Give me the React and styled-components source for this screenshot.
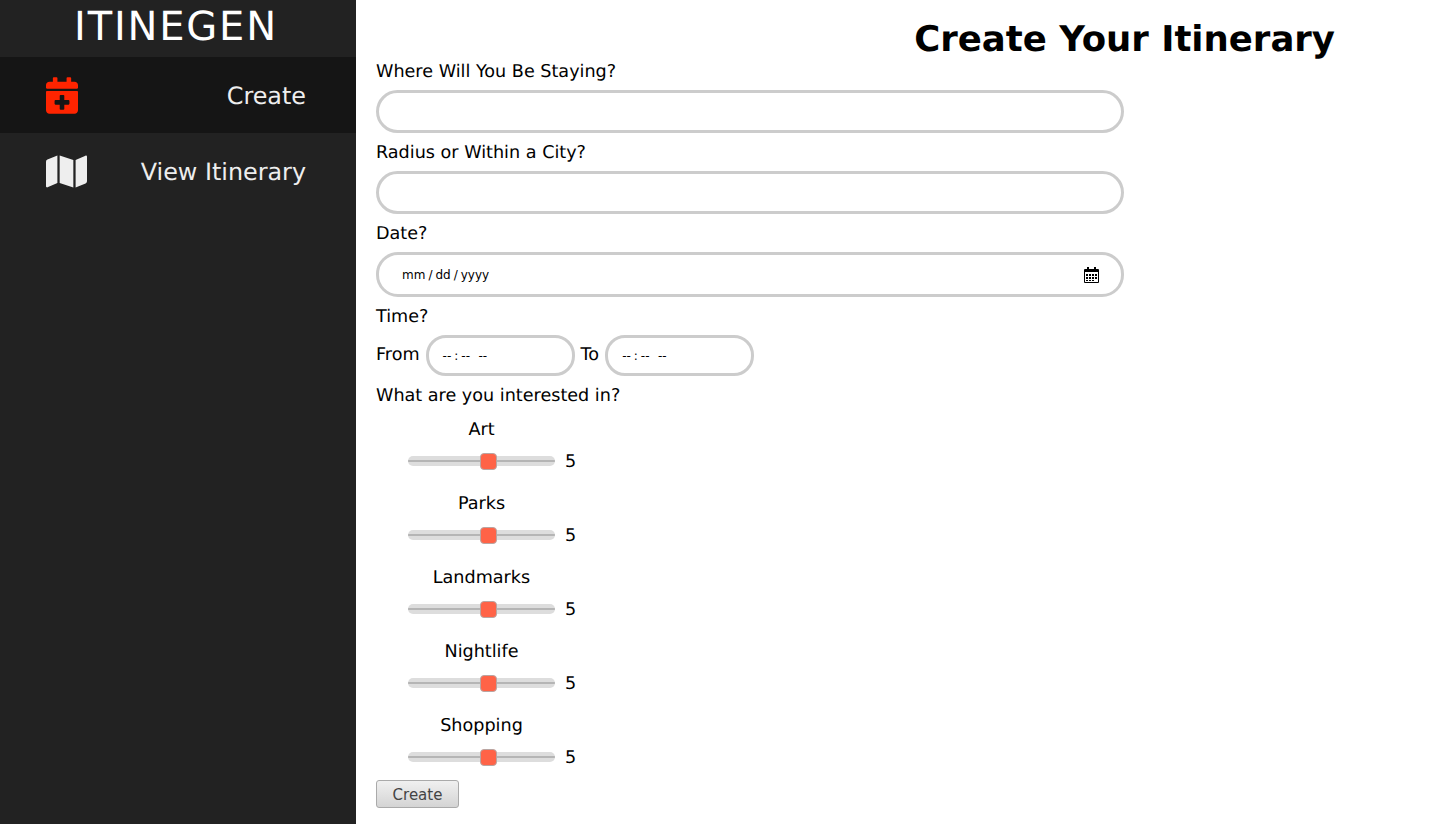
import React, { useState } from "react";
import styled, { createGlobalStyle } from "styled-components";
import { FaCalendarPlus, FaMap } from "react-icons/fa";

const GlobalStyle = createGlobalStyle`
  html, body {
    margin: 0;
    padding: 0;
    height: 100%;
    background: #fff;
    font-family: "DejaVu Sans", sans-serif;
    text-rendering: geometricPrecision;
  }
`;

const Page = styled.div`
  display: flex;
  height: 824px;
  overflow: hidden;
`;

const Sidebar = styled.nav`
  width: 356px;
  flex-shrink: 0;
  background: #222;
`;

const Logo = styled.div`
  height: 57px;
  padding: 0 4px 3px 0;
  box-sizing: border-box;
  display: flex;
  align-items: center;
  justify-content: center;
  color: #fff;
  font-size: 40px;
  letter-spacing: 1.8px;
`;

const NavItem = styled.a`
  height: 76px;
  padding: 0 50px 0 46px;
  display: flex;
  align-items: center;
  justify-content: space-between;
  background: ${(p) => (p.$active ? "#151515" : "transparent")};
  color: #eee;
  font-size: 23.85px;
`;

const NavText = styled.span`
  padding-top: 2px;
`;

const CreateIcon = styled(FaCalendarPlus)`
  width: 32px;
  height: 37px;
  color: #ff2400;
`;

const MapIcon = styled(FaMap)`
  width: 41px;
  height: 37px;
  color: #eee;
`;

const Main = styled.main`
  flex: 1;
  padding: 0 20px;
  color: #000;
  font-size: 17.6px;
`;

const Title = styled.h1`
  margin: 0;
  height: 61px;
  padding: 18px 88px 0 0;
  box-sizing: border-box;
  text-align: right;
  font-size: 35.5px;
  line-height: 43px;
  font-weight: bold;
`;

const Label = styled.label`
  display: block;
  height: 21px;
  line-height: 23px;
`;

const Field = styled.input`
  display: block;
  width: 748px;
  height: 43px;
  margin: 8px 0 9px;
  padding: 0 20px 0 23px;
  box-sizing: border-box;
  border: 3px solid #ccc;
  border-radius: 22px;
  outline: none;
  background: #fff;
  font-family: inherit;
  font-size: 12px;
`;

const DateWrap = styled.div`
  position: relative;
  width: 748px;
  margin: 8px 0 9px;
`;

const DateInput = styled(Field)`
  height: 45px;
  margin: 0;
  padding-left: 22px;
  &::-webkit-datetime-edit-text {
    padding: 0 2px;
  }
  &::-webkit-calendar-picker-indicator {
    opacity: 0;
  }
`;

const CalendarIcon = styled.svg`
  position: absolute;
  top: 14px;
  right: 24px;
  width: 17px;
  height: 18px;
  pointer-events: none;
`;

const TimeRow = styled.div`
  display: flex;
  align-items: baseline;
  gap: 6px;
  margin: 8px 0 9px;
  height: 41px;
`;

const TimeInput = styled.input`
  width: 149px;
  height: 41px;
  padding: 0 13px;
  box-sizing: border-box;
  border: 3px solid #ccc;
  border-radius: 20px;
  outline: none;
  background: #fff;
  font-family: inherit;
  font-size: 12px;
  &::-webkit-calendar-picker-indicator {
    display: none;
  }
  &::-webkit-datetime-edit-text {
    padding: 0 2px;
  }
`;

const Interests = styled.div`
  padding-top: 13px;
`;

const Interest = styled.div`
  width: 211px;
  height: 74px;
  text-align: center;
`;

const InterestName = styled.div`
  height: 21px;
  line-height: 23px;
`;

const SliderRow = styled.div`
  display: flex;
  align-items: center;
  gap: 10px;
  height: 32px;
  margin-top: 5px;
  padding-left: 32px;
`;

const SliderValue = styled.span`
  height: 21px;
  line-height: 23px;
`;

const Slider = styled.input`
  -webkit-appearance: none;
  appearance: none;
  width: 147px;
  height: 10px;
  margin: 0;
  border-radius: 5px;
  outline: none;
  background: linear-gradient(#b5b5b5, #b5b5b5) center / 100% 2px no-repeat, #ddd;

  &::-webkit-slider-thumb {
    -webkit-appearance: none;
    width: 17px;
    height: 17px;
    box-sizing: border-box;
    border: 1px solid #b9a5a2;
    border-radius: 4px;
    background: #ff6347;
  }
`;

const SubmitRow = styled.div`
  margin-top: -9px;
`;

const SubmitButton = styled.button`
  display: block;
  width: 83px;
  height: 28px;
  padding: 2px 0 0;
  border: 1px solid #aaa;
  border-radius: 3px;
  background: linear-gradient(#f0f0f0, #d4d4d4);
  color: #444;
  font-family: inherit;
  font-size: 15px;
`;

const interests = ["Art", "Parks", "Landmarks", "Nightlife", "Shopping"];

const InterestSlider = ({ name }) => {
  const [value, setValue] = useState(5);
  return (
    <Interest>
      <InterestName>{name}</InterestName>
      <SliderRow>
        <Slider
          type="range"
          min="0"
          max="9"
          value={value}
          onChange={(e) => setValue(e.target.value)}
        />
        <SliderValue>{value}</SliderValue>
      </SliderRow>
    </Interest>
  );
};

const App = () => {
  return (
    <Page>
      <GlobalStyle />
      <Sidebar>
        <Logo>ITINEGEN</Logo>
        <NavItem $active>
          <CreateIcon />
          <NavText>Create</NavText>
        </NavItem>
        <NavItem>
          <MapIcon />
          <NavText>View Itinerary</NavText>
        </NavItem>
      </Sidebar>
      <Main>
        <Title>Create Your Itinerary</Title>
        <form>
          <Label>Where Will You Be Staying?</Label>
          <Field type="text" />
          <Label>Radius or Within a City?</Label>
          <Field type="text" />
          <Label>Date?</Label>
          <DateWrap>
            <DateInput type="date" />
            <CalendarIcon viewBox="0 0 17 18">
              <path d="M1.5 3.5h14v13h-14z" fill="#fff" stroke="#000" />
              <path d="M2 3h13v3H2zM4 1h2v3H4zM11 1h2v3h-2z" fill="#000" />
              <path
                d="M3 8h2v2H3zM6 8h2v2H6zM9 8h2v2H9zM12 8h2v2h-2zM3 11h2v2H3zM6 11h2v2H6zM9 11h2v2H9zM12 11h2v2h-2zM3 14h2v1H3zM6 14h2v1H6zM9 14h2v1H9z"
                fill="#000"
              />
            </CalendarIcon>
          </DateWrap>
          <Label>Time?</Label>
          <TimeRow>
            <span>From</span>
            <TimeInput type="time" />
            <span>To</span>
            <TimeInput type="time" />
          </TimeRow>
          <Label>What are you interested in?</Label>
          <Interests>
            {interests.map((name) => (
              <InterestSlider key={name} name={name} />
            ))}
          </Interests>
          <SubmitRow>
            <SubmitButton type="button">Create</SubmitButton>
          </SubmitRow>
        </form>
      </Main>
    </Page>
  );
};

export default App;
